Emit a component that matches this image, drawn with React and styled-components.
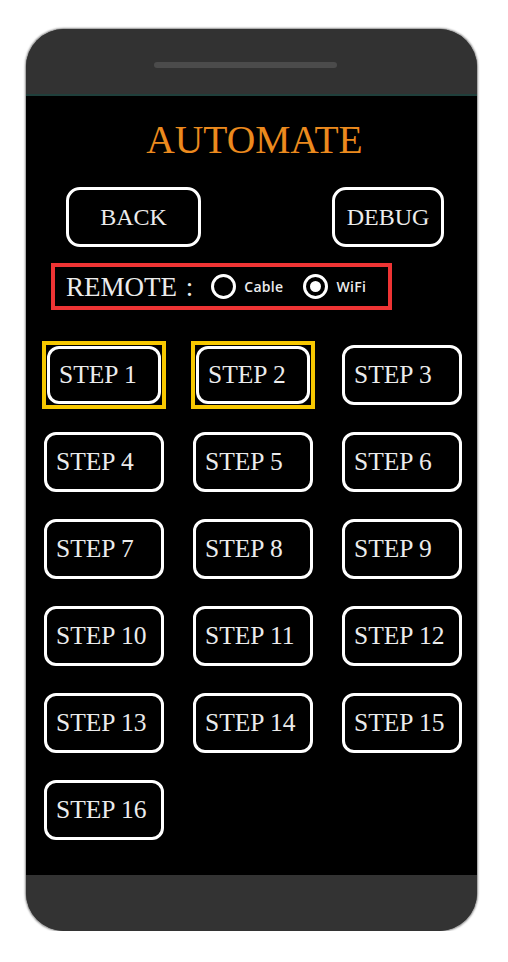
import React from "react";
import styled, { createGlobalStyle } from "styled-components";

const Global = createGlobalStyle`
  html, body { margin: 0; padding: 0; background: #ffffff; }
  body { font-family: "Liberation Serif", "Times New Roman", serif; }
`;

const Phone = styled.div`
  width: 451px;
  height: 902px;
  margin: 29px 0 0 26px;
  box-sizing: border-box;
  border-radius: 38px;
  overflow: hidden;
  background: #333333;
  display: flex;
  flex-direction: column;
  box-shadow: 0 0 2px 0.5px rgba(0, 0, 0, 0.45);
`;

const TopBezel = styled.div`
  height: 67px;
  flex: none;
  display: flex;
  justify-content: center;
  padding-top: 33px;
  box-sizing: border-box;
  background: #323232;
  border-bottom: 2px solid #1f3f3b;
`;

const Speaker = styled.div`
  width: 183px;
  height: 6px;
  margin-left: -13px;
  border-radius: 3px;
  background: #4b4b4b;
`;

const Screen = styled.div`
  height: 779px;
  flex: none;
  background: #000000;
  display: flex;
  flex-direction: column;
  padding-top: 25px;
  box-sizing: border-box;
`;

const BottomBezel = styled.div`
  flex: 1;
  background: #333333;
`;

const Title = styled.h1`
  margin: 0;
  font-family: "Liberation Serif", "Times New Roman", serif;
  font-weight: normal;
  font-size: 39.5px;
  line-height: 38px;
  height: 38px;
  color: #ec8a1e;
  text-align: center;
  padding-left: 6px;
`;

const TopRow = styled.div`
  display: flex;
  justify-content: space-between;
  margin: 28px 33px 0 40px;
`;

const NavButton = styled.div`
  width: ${(p) => p.$w}px;
  height: 60px;
  box-sizing: border-box;
  border: 3px solid #ffffff;
  border-radius: 14px;
  display: flex;
  align-items: center;
  justify-content: center;
  color: #ececec;
  font-size: 24px;
  font-family: "Liberation Serif", "Times New Roman", serif;
`;

const RemoteBox = styled.div`
  margin: 16px 0 0 25px;
  width: 341px;
  height: 47px;
  box-sizing: border-box;
  border: 4px solid #ee3434;
  display: flex;
  align-items: center;
  padding-left: 11px;
`;

const RemoteLabel = styled.span`
  color: #ececec;
  font-size: 27px;
  font-family: "Liberation Serif", "Times New Roman", serif;
  margin-right: 18px;
  margin-top: 1px;
  word-spacing: 2px;
`;

const Radio = styled.span`
  width: 25px;
  height: 25px;
  box-sizing: border-box;
  border: 3px solid #ffffff;
  border-radius: 50%;
  display: flex;
  align-items: center;
  justify-content: center;
  flex: none;
  &::after {
    content: "";
    display: ${(p) => (p.$checked ? "block" : "none")};
    width: 11px;
    height: 11px;
    border-radius: 50%;
    background: #ffffff;
  }
`;

const RadioText = styled.span`
  color: #ececec;
  font-family: "Open Sans", "DejaVu Sans", sans-serif;
  font-weight: 600;
  font-size: 14px;
  letter-spacing: 0.3px;
  margin-left: 8px;
  margin-right: ${(p) => p.$mr || 0}px;
`;

const Grid = styled.div`
  display: grid;
  grid-template-columns: repeat(3, 124px);
  grid-auto-rows: 68px;
  column-gap: 25px;
  row-gap: 19px;
  margin: 31px 0 0 16px;
`;

const Cell = styled.div`
  display: flex;
  align-items: center;
  justify-content: center;
`;

const Highlight = styled.div`
  width: 124px;
  height: 68px;
  box-sizing: border-box;
  border: 4px solid #f7c800;
  padding: 1px;
  display: flex;
`;

const StepButton = styled.div`
  width: ${(p) => (p.$fill ? "100%" : "120px")};
  height: ${(p) => (p.$fill ? "100%" : "60px")};
  box-sizing: border-box;
  border: 3px solid #ffffff;
  border-radius: 12px;
  display: flex;
  align-items: center;
  padding-left: 9px;
  color: #ececec;
  font-size: 25.5px;
  font-family: "Liberation Serif", "Times New Roman", serif;
  white-space: nowrap;
`;

const steps = Array.from({ length: 16 }, (_, i) => i + 1);
const highlighted = new Set([1, 2]);

export default function App() {
  return (
    <>
      <Global />
      <Phone>
        <TopBezel>
          <Speaker />
        </TopBezel>
        <Screen>
          <Title>AUTOMATE</Title>
          <TopRow>
            <NavButton $w={135}>BACK</NavButton>
            <NavButton $w={112}>DEBUG</NavButton>
          </TopRow>
          <RemoteBox>
            <RemoteLabel>REMOTE :</RemoteLabel>
            <Radio />
            <RadioText $mr={20}>Cable</RadioText>
            <Radio $checked />
            <RadioText>WiFi</RadioText>
          </RemoteBox>
          <Grid>
            {steps.map((n) => (
              <Cell key={n}>
                {highlighted.has(n) ? (
                  <Highlight>
                    <StepButton $fill>STEP {n}</StepButton>
                  </Highlight>
                ) : (
                  <StepButton>STEP {n}</StepButton>
                )}
              </Cell>
            ))}
          </Grid>
        </Screen>
        <BottomBezel />
      </Phone>
    </>
  );
}
